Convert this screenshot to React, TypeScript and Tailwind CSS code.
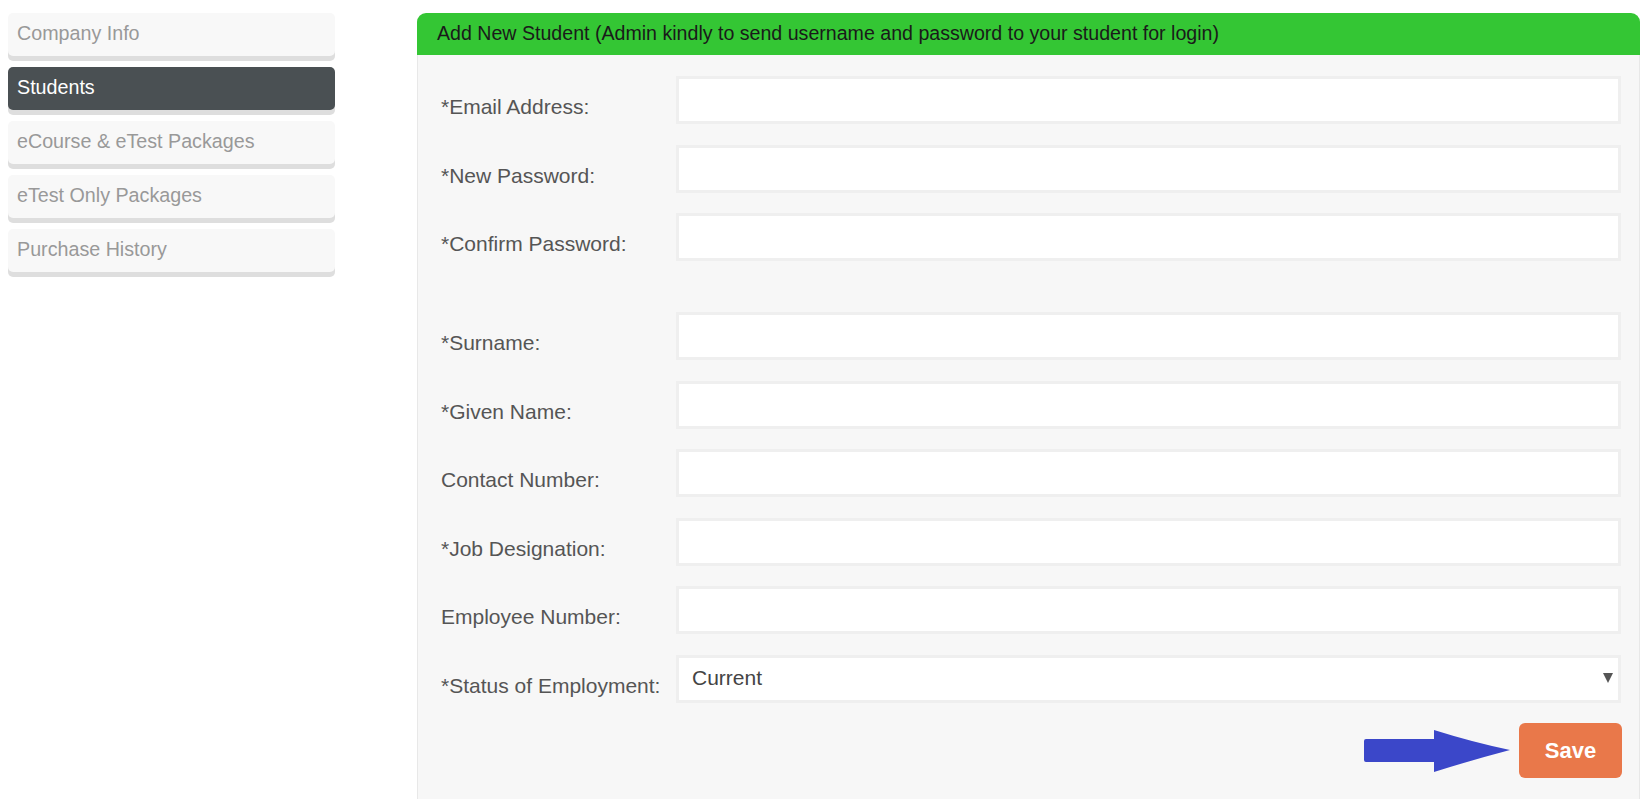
import React from "react";

const menu = [
  { label: "Company Info", active: false },
  { label: "Students", active: true },
  { label: "eCourse & eTest Packages", active: false },
  { label: "eTest Only Packages", active: false },
  { label: "Purchase History", active: false },
];

const fieldsTop = ["*Email Address:", "*New Password:", "*Confirm Password:"];
const fieldsBottom = [
  "*Surname:",
  "*Given Name:",
  "Contact Number:",
  "*Job Designation:",
  "Employee Number:",
];

const Row = ({ label, children }: { label: string; children?: React.ReactNode }) => (
  <div className="flex items-start">
    <div className="w-[236px] shrink-0 pl-[1px] pt-[17px] text-[21px] leading-[28px] text-[#555]">{label}</div>
    <div className="flex-1 h-[48px] border-[3px] border-[#efefef] bg-white">{children}</div>
  </div>
);

const BlueArrow = () => (
  <svg width="146" height="42" viewBox="0 0 146 42">
    <path d="M2 9 H70 V0 Q108 12 146 20 Q108 30 70 42 V32 H2 Q0 32 0 30 V11 Q0 9 2 9 Z" fill="#3b47c9" />
  </svg>
);

export default function App() {
  return (
    <div className="flex items-start pt-[13px] min-h-screen bg-white font-['Liberation_Sans',Arial,sans-serif] overflow-hidden">
      <div className="ml-[8px] w-[327px] shrink-0 flex flex-col gap-[11px]">
        {menu.map((item) => (
          <div
            key={item.label}
            className={`h-[43px] rounded-[5px] pl-[9px] pb-[1px] flex items-center text-[19.7px] shadow-[0_5px_0_#dedede] ${
              item.active ? "bg-[#4a5053] text-white" : "bg-[#f8f8f8] text-[#999]"
            }`}
          >
            {item.label}
          </div>
        ))}
      </div>

      <div className="ml-[82px] mr-[2px] flex-1 min-h-[800px] flex flex-col">
        <div className="h-[42px] rounded-t-[9px] bg-[#34c634] pl-[20px] flex items-center text-[19.6px] text-[#1a1a1a]">
          Add New Student (Admin kindly to send username and password to your student for login)
        </div>
        <div className="flex-1 bg-[#f7f7f7] border-x border-[#e8e8e8] pl-[22px] pr-[18px] pt-[21px] flex flex-col">
          <div className="flex flex-col gap-[20.5px]">
            {fieldsTop.map((f) => (
              <Row key={f} label={f} />
            ))}
          </div>
          <div className="h-[51px]" />
          <div className="flex flex-col gap-[20.5px]">
            {fieldsBottom.map((f) => (
              <Row key={f} label={f} />
            ))}
            <Row label="*Status of Employment:">
              <div className="h-full flex items-center justify-between pl-[13px] pr-[5px]">
                <span className="text-[21px] text-[#444] -mt-[1px]">Current</span>
                <svg width="10" height="10" viewBox="0 0 10 10" className="-mt-[2px]">
                  <path d="M0 0 H10 L5 10 Z" fill="#555" />
                </svg>
              </div>
            </Row>
          </div>
          <div className="mt-[20.5px] flex items-center justify-end gap-[9px] -mr-[1px]">
            <BlueArrow />
            <button className="w-[103px] h-[55px] rounded-[6px] bg-[#e9784a] text-white font-bold text-[22px]">
              Save
            </button>
          </div>
        </div>
      </div>
    </div>
  );
}
